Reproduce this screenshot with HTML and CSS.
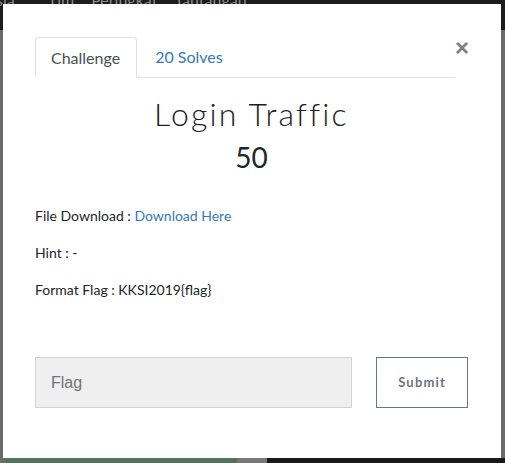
FILE: index.html
```
<!DOCTYPE html>
<html>
<head>
<meta charset="utf-8">
<link rel="stylesheet" href="styles.css">
</head>
<body>
<div class="page">
  <nav class="nav">
    <span class="brand">sia</span>
    <span class="link">Tim</span>
    <span class="link">Peringkat</span>
    <span class="link">Tantangan</span>
  </nav>
  <div class="content"></div>
  <div class="cards">
    <div class="card green"></div>
    <div class="card gray"></div>
    <div class="card dark"></div>
  </div>
</div>

<div class="modal">
  <div class="tabs-row">
    <ul class="tabs">
      <li class="tab active">Challenge</li>
      <li class="tab">20 Solves</li>
    </ul>
    <span class="close">&times;</span>
  </div>
  <h2 class="title">Login Traffic</h2>
  <h3 class="points">50</h3>
  <div class="desc">
    <p>File Download : <a class="link-blue">Download Here</a></p>
    <p>Hint : -</p>
    <p>Format Flag : KKSI2019{flag}</p>
  </div>
  <div class="form">
    <div class="input">Flag</div>
    <div class="btn">Submit</div>
  </div>
</div>
</body>
</html>
```
FILE: styles.css
```
html, body { margin: 0; padding: 0; }
body {
  width: 505px;
  height: 463px;
  overflow: hidden;
  background: #6b6b6b;
  font-family: Lato, "Noto Sans", sans-serif;
}
.page { display: flex; flex-direction: column; height: 463px; }
.nav {
  height: 30px;
  background: #1c1d1f;
  display: flex;
  align-items: flex-end;
  padding-left: 0;
  font-size: 16px;
  color: #8a8b8c;
  line-height: 1;
  overflow: hidden;
}
.nav span { margin-bottom: 22px; }
.nav .brand { margin-left: -4px; margin-right: 33px; }
.nav .link { margin-right: 17px; }
.content { flex: 1; }
.cards { display: flex; height: 5px; }
.card.green { width: 232px; margin-left: 5px; background: #52725a; }
.card.gray { width: 30px; background: #787878; }
.card.dark { flex: 1; background: #17191c; }

.modal {
  position: absolute;
  left: 3px;
  top: 4px;
  width: 498px;
  height: 454px;
  background: #fff;
  box-sizing: border-box;
  padding: 33px 33px 0 32px;
}
.tabs-row { display: flex; align-items: flex-start; }
.tabs {
  list-style: none;
  margin: 0;
  padding: 0;
  display: flex;
  width: 420px;
  border-bottom: 1px solid #dee2e6;
  height: 40px;
}
.tab {
  height: 40px;
  box-sizing: border-box;
  padding: 0 18px;
  font-size: 16px;
  line-height: 40px;
  color: #337ab7;
}
.tab.active {
  color: #495057;
  border: 1px solid #dee2e6;
  border-bottom-color: #fff;
  border-radius: 4px 4px 0 0;
  height: 41px;
  padding: 0 16px 0 15px;
}
.close {
  margin-left: auto;
  margin-right: -1px;
  margin-top: 1px;
  font-size: 24px;
  line-height: 20px;
  font-weight: 700;
  color: #7f7f7f;
  font-family: "Liberation Sans", Arial, sans-serif;
}
.title {
  margin: 16px 0 0;
  text-align: center;
  font-weight: 300;
  font-size: 32px;
  line-height: 40px;
  color: #1d2024;
  letter-spacing: 2.2px;
}
.points {
  margin: 6px 0 0;
  text-align: center;
  font-weight: 400;
  font-size: 28px;
  line-height: 34px;
  color: #212529;
}
.desc { margin-top: 33px; font-size: 14px; color: #212529; }
.desc p { margin: 0 0 20px; line-height: 17px; }
.link-blue { color: #337ab7; }
.form { display: flex; margin-top: 59px; align-items: flex-start; }
.input {
  width: 318px;
  height: 51px;
  box-sizing: border-box;
  background: #efefef;
  border: 1px solid #ced4da;
  padding-left: 15px;
  line-height: 49px;
  font-family: "Liberation Sans", Arial, sans-serif;
  font-size: 16px;
  color: #6c757d;
}
.btn {
  margin-left: 24px;
  width: 92px;
  height: 51px;
  box-sizing: border-box;
  border: 1px solid #6c757d;
  text-align: center;
  line-height: 49px;
  font-size: 13px;
  font-weight: 700;
  letter-spacing: 1.2px;
  color: #6c757d;
}
```
